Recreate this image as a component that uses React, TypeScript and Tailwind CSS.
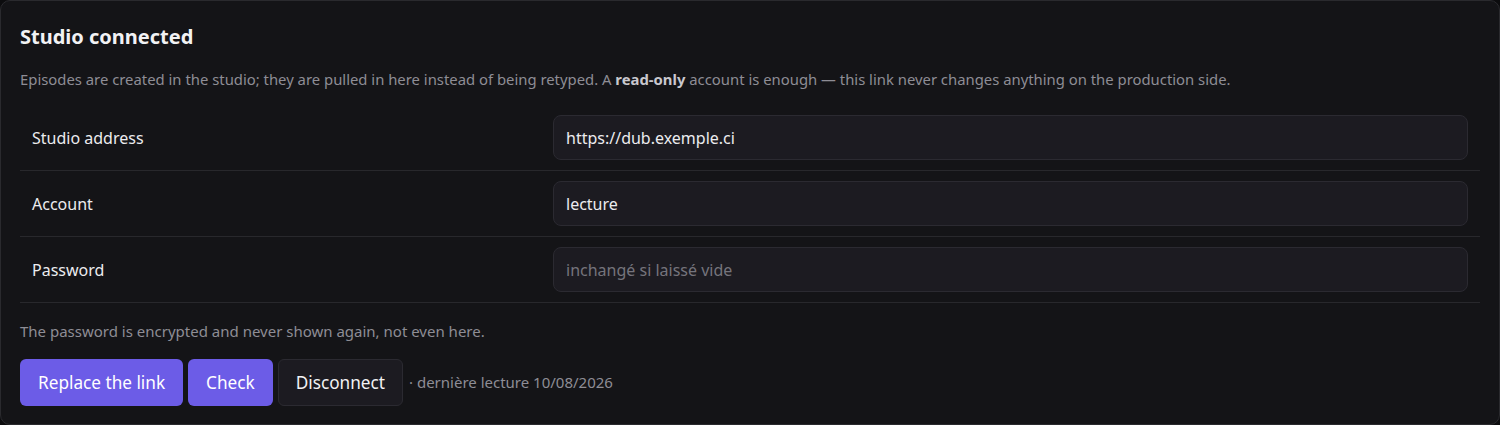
const rows = [
  { label: 'Studio address', value: 'https://dub.exemple.ci', placeholder: '' },
  { label: 'Account', value: 'lecture', placeholder: '' },
  { label: 'Password', value: '', placeholder: 'inchangé si laissé vide' },
];

function FieldRow({ label, value, placeholder }: { label: string; value: string; placeholder: string }) {
  return (
    <div className="flex items-center border-b border-[#28282c] px-3 py-2.5">
      <label className="w-[521px] shrink-0 text-[16px] text-[#ececef]">{label}</label>
      <input
        type={label === 'Password' ? 'password' : 'text'}
        defaultValue={value}
        placeholder={placeholder}
        className="h-[45px] flex-1 rounded-lg border border-[#2b2a31] bg-[#1c1b21] px-3 text-[16px] text-[#ececef] outline-none placeholder:text-[#75747c]"
      />
    </div>
  );
}

export default function App() {
  return (
    <div
      className="min-h-[425px] bg-[#0c0c0e]"
      style={{ fontFamily: '"Noto Sans", "Open Sans", sans-serif' }}
    >
      <div className="h-[425px] rounded-[10px] border border-[#2a2a2e] bg-[#141417] px-[19px] pt-[22px]">
        <h2 className="text-[20px] font-bold leading-7 text-[#f2f2f4]">Studio connected</h2>
        <p className="mt-[18px] text-[14.85px] leading-5 text-[#8e8d95]">
          Episodes are created in the studio; they are pulled in here instead of being retyped. A{' '}
          <strong className="font-bold text-[#c9c8ce]">read-only</strong> account is enough — this link never changes
          anything on the production side.
        </p>
        <div className="mt-[16px]">
          {rows.map((r) => (
            <FieldRow key={r.label} {...r} />
          ))}
        </div>
        <p className="mt-[18px] text-[15px] leading-5 text-[#8e8d95]">
          The password is encrypted and never shown again, not even here.
        </p>
        <div className="mt-[18px] flex items-center gap-[5px]">
          <button className="h-[47px] rounded-md bg-[#6c5ce7] px-[18px] text-[17.2px] text-white">Replace the link</button>
          <button className="h-[47px] rounded-md bg-[#6c5ce7] px-[18px] text-[17.2px] text-white">Check</button>
          <button className="h-[47px] rounded-md border border-[#2b2a31] bg-[#1c1b21] px-[17px] text-[17.2px] text-[#f2f2f4]">
            Disconnect
          </button>
          <span className="ml-[1px] text-[15px] text-[#8e8d95]">· dernière lecture 10/08/2026</span>
        </div>
      </div>
    </div>
  );
}
